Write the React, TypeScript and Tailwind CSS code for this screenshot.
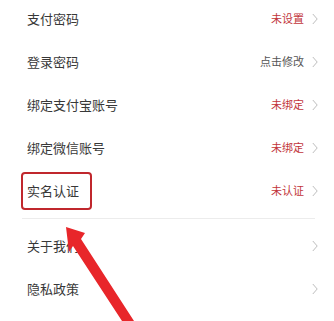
import { FC } from "react";

type Row = {
  label: string;
  value?: string;
  tone?: "red" | "gray";
  mark?: boolean;
};

const topRows: Row[] = [
  { label: "支付密码", value: "未设置", tone: "red" },
  { label: "登录密码", value: "点击修改", tone: "gray" },
  { label: "绑定支付宝账号", value: "未绑定", tone: "red" },
  { label: "绑定微信账号", value: "未绑定", tone: "red" },
  { label: "实名认证", value: "未认证", tone: "red", mark: true },
];

const bottomRows: Row[] = [{ label: "关于我们" }, { label: "隐私政策" }];

const Chevron = () => (
  <svg width="6" height="12" viewBox="0 0 6 12" className="shrink-0">
    <polyline points="0.8,1 5.2,6 0.8,11" fill="none" stroke="#b5b5b5" strokeWidth="0.9" />
  </svg>
);

const SettingRow: FC<{ row: Row }> = ({ row }) => (
  <div className="relative flex h-[43px] items-center pl-[27px] pr-[16px]">
    <span className="flex-1 text-[13px] text-[#383838]">{row.label}</span>
    {row.value && (
      <span
        className={
          row.tone === "red"
            ? "mr-[8px] text-[11px] text-[#c2353b]"
            : "mr-[8px] text-[11px] text-[#555]"
        }
      >
        {row.value}
      </span>
    )}
    <Chevron />
    {row.mark && (
      <div className="absolute left-[21px] top-[3px] h-[38px] w-[71px] rounded-[4px] border-[2.5px] border-[#c0272d]" />
    )}
  </div>
);

export default function App() {
  return (
    <div
      className="relative h-[321px] w-[334px] overflow-hidden bg-white"
      style={{ fontFamily: '"Noto Sans CJK SC", "Noto Sans", sans-serif' }}
    >
      <div className="-mt-[3px] flex flex-col">
        {topRows.map((r) => (
          <SettingRow key={r.label} row={r} />
        ))}
        <div className="flex h-[12px] items-center">
          <div className="ml-[22px] h-px w-[293px] bg-[#ececec]" />
        </div>
        {bottomRows.map((r) => (
          <SettingRow key={r.label} row={r} />
        ))}
      </div>

      {/* annotation arrow */}
      <svg className="pointer-events-none absolute left-0 top-0" width="334" height="321" viewBox="0 0 334 321">
        <polygon
          points="66,227 85,233 81,239 134,321 122,321 73,246 69,252"
          fill="#e8262a"
        />
      </svg>
    </div>
  );
}
